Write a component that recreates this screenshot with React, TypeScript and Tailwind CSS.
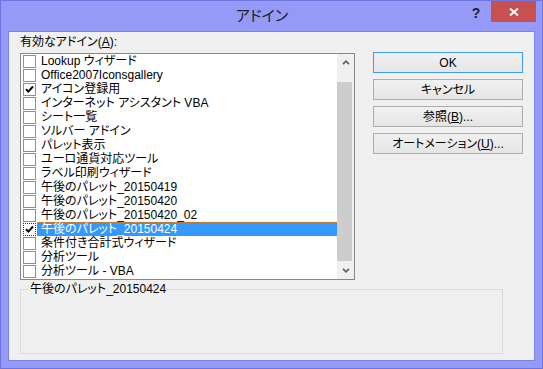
import React from "react";

type AddIn = { name: string; checked?: boolean; selected?: boolean };

const addIns: AddIn[] = [
  { name: "Lookup ウィザード" },
  { name: "Office2007Iconsgallery" },
  { name: "アイコン登録用", checked: true },
  { name: "インターネット アシスタント VBA" },
  { name: "シート一覧" },
  { name: "ソルバー アドイン" },
  { name: "パレット表示" },
  { name: "ユーロ通貨対応ツール" },
  { name: "ラベル印刷ウィザード" },
  { name: "午後のパレット_20150419" },
  { name: "午後のパレット_20150420" },
  { name: "午後のパレット_20150420_02" },
  { name: "午後のパレット_20150424", checked: true, selected: true },
  { name: "条件付き合計式ウィザード" },
  { name: "分析ツール" },
  { name: "分析ツール - VBA" },
];

function Check() {
  return (
    <svg width="9" height="9" viewBox="0 0 9 9">
      <path d="M1 4.2 L3.3 6.6 L8 1.5" fill="none" stroke="#000" strokeWidth="1.9" />
    </svg>
  );
}

function Row({ item }: { item: AddIn }) {
  return (
    <div className="flex h-[14px] items-center">
      <span
        className={
          item.selected
            ? "ml-[2px] flex h-[13px] w-[13px] items-center justify-center border border-dotted border-[#333] bg-white"
            : "ml-[2px] flex h-[13px] w-[13px] items-center justify-center border border-[#8f8f8f] bg-white"
        }
      >
        {item.checked && <Check />}
      </span>
      <span
        className={
          item.selected
            ? "ml-[1px] flex h-[14px] flex-1 items-center border border-dotted border-[#c8782e] bg-[#3399ff] pl-[3px] text-white"
            : "ml-[1px] flex h-[14px] flex-1 items-center pl-[4px] text-black"
        }
      >
        {item.name}
      </span>
    </div>
  );
}

function Chevron({ up }: { up?: boolean }) {
  return (
    <svg width="8" height="5" viewBox="0 0 8 5">
      <path
        d={up ? "M1 4.2 L4 1.2 L7 4.2" : "M1 0.8 L4 3.8 L7 0.8"}
        fill="none"
        stroke="#606060"
        strokeWidth="1.7"
      />
    </svg>
  );
}

function Button({ children, primary }: { children: React.ReactNode; primary?: boolean }) {
  return (
    <div
      className={
        primary
          ? "flex h-[21px] w-[150px] items-center justify-center border border-[#3c9cf0] bg-gradient-to-b from-[#f1f1f1] to-[#e5e5e5]"
          : "flex h-[21px] w-[150px] items-center justify-center border border-[#adadad] bg-gradient-to-b from-[#f1f1f1] to-[#e5e5e5]"
      }
    >
      {children}
    </div>
  );
}

export default function App() {
  return (
    <div className="flex h-[369px] w-[543px] flex-col border border-[#6f74de] bg-[#9599f7] font-['Liberation_Sans','Noto_Sans_CJK_JP',sans-serif] text-[12px] leading-[14px] text-black [font-feature-settings:'palt']">
      {/* title bar */}
      <div className="flex h-[30px] items-start">
        <div className="flex h-[30px] flex-1 items-center justify-center pl-[62px] text-[15px] text-[#222]">
          アドイン
        </div>
        <div className="flex h-[21px] w-[30px] items-center justify-center pt-[2px] text-[14px] font-bold text-[#222]">
          ?
        </div>
        <div className="mr-[6px] flex h-[21px] w-[45px] items-center justify-center bg-[#c75050]">
          <svg width="10" height="8" viewBox="0 0 10 8">
            <path d="M1 0.5 L9 7.5 M9 0.5 L1 7.5" stroke="#fff" strokeWidth="2" />
          </svg>
        </div>
      </div>

      {/* client */}
      <div className="mx-[7px] mb-[7px] flex flex-1 flex-col border border-[#7c81e4] bg-[#f0f0f0] pl-[11px]">
        <div className="flex">
          <div className="flex w-[335px] flex-col pt-[3px]">
            <div className="h-[14px]">
              有効なアドイン(<span className="underline">A</span>):
            </div>
            <div className="mt-[4px] flex h-[227px] border border-[#828790] bg-white">
              <div className="flex flex-1 flex-col">
                {addIns.map((a) => (
                  <Row key={a.name} item={a} />
                ))}
              </div>
              <div className="flex w-[17px] flex-col bg-[#f0f0f0]">
                <div className="flex h-[17px] items-center justify-center">
                  <Chevron up />
                </div>
                <div className="flex flex-1 flex-col pt-[11px] pb-[1px]">
                  <div className="w-[15px] flex-1 bg-[#cdcdcd]" />
                </div>
                <div className="flex h-[17px] items-center justify-center">
                  <Chevron />
                </div>
              </div>
            </div>
          </div>
          <div className="ml-[18px] mt-[20px] flex flex-col gap-[6px]">
            <Button primary>OK</Button>
            <Button>キャンセル</Button>
            <Button>
              参照(<span className="underline">B</span>)...
            </Button>
            <Button>
              オートメーション(<span className="underline">U</span>)...
            </Button>
          </div>
        </div>

        <fieldset className="mt-[2px] h-[72px] w-[483px] border border-[#dcdcdc]">
          <legend className="ml-[8px] px-[1px] leading-[14px]">午後のパレット_20150424</legend>
        </fieldset>
      </div>
    </div>
  );
}
